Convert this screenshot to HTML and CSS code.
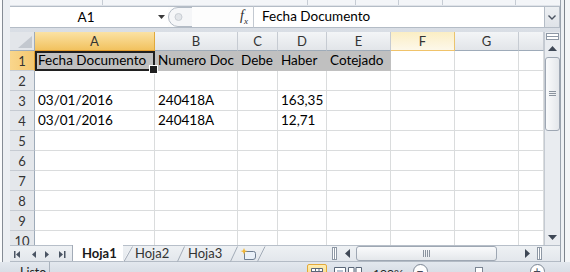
FILE: index.html
```html
<!DOCTYPE html>
<html lang="es">
<head>
    <meta charset="UTF-8">
    <meta name="viewport" content="width=device-width, initial-scale=1.0">
    <title>Libro1 - Microsoft Excel</title>
    <link rel="stylesheet" href="styles.css">
</head>
<body>
<div class="app">
    <div class="window">
        <div class="frame-left"></div>

        <div class="main">
            <!-- Bottom edge of the ribbon -->
            <div class="ribbon-edge"></div>

            <!-- Formula bar -->
            <div class="formula-bar">
                <div class="name-box">
                    <span class="cell-ref">A1</span>
                    <svg class="dd-arrow" width="7" height="4" viewBox="0 0 7 4"><path d="M0 0h7L3.5 4z" fill="#3a3a3a"/></svg>
                </div>
                <div class="fx-zone">
                    <svg class="splitter" width="24" height="20" viewBox="0 0 24 20">
                        <path d="M24 0.5H10A9.5 9.5 0 0 0 10 19.5H24" fill="#f5f6f8" stroke="#b3bbc5"/>
                        <circle cx="10.5" cy="10" r="3.5" fill="#e2e5e9" stroke="#c9ced4"/>
                    </svg>
                    <span class="fx">f<sub>x</sub></span>
                </div>
                <div class="formula-input">Fecha Documento</div>
                <div class="expand-btn">
                    <svg width="8" height="5" viewBox="0 0 8 5"><path d="M0.5 0.5L4 4L7.5 0.5" fill="none" stroke="#4a5260" stroke-width="1.4"/></svg>
                </div>
            </div>

            <!-- Worksheet -->
            <div class="workspace">
                <div class="sheet">
                    <div class="corner"><svg width="14" height="12" viewBox="0 0 14 12"><path d="M14 0V12H0z" fill="#c3c8cf"/></svg></div>
                    <div class="col-head selected">A</div>
                    <div class="col-head">B</div>
                    <div class="col-head">C</div>
                    <div class="col-head">D</div>
                    <div class="col-head">E</div>
                    <div class="col-head hover">F</div>
                    <div class="col-head">G</div>
                    <div class="col-head"></div>

                    <div class="row-head selected">1</div>
                    <div class="cell fill active">Fecha Documento</div>
                    <div class="cell fill">Numero Doc</div>
                    <div class="cell fill">Debe</div>
                    <div class="cell fill">Haber</div>
                    <div class="cell fill">Cotejado</div>
                    <div class="cell"></div><div class="cell"></div><div class="cell"></div>

                    <div class="row-head">2</div>
                    <div class="cell"></div><div class="cell"></div><div class="cell"></div><div class="cell"></div>
                    <div class="cell"></div><div class="cell"></div><div class="cell"></div><div class="cell"></div>

                    <div class="row-head">3</div>
                    <div class="cell">03/01/2016</div>
                    <div class="cell">240418A</div>
                    <div class="cell"></div>
                    <div class="cell">163,35</div>
                    <div class="cell"></div><div class="cell"></div><div class="cell"></div><div class="cell"></div>

                    <div class="row-head">4</div>
                    <div class="cell">03/01/2016</div>
                    <div class="cell">240418A</div>
                    <div class="cell"></div>
                    <div class="cell">12,71</div>
                    <div class="cell"></div><div class="cell"></div><div class="cell"></div><div class="cell"></div>

                    <div class="row-head">5</div>
                    <div class="cell"></div><div class="cell"></div><div class="cell"></div><div class="cell"></div>
                    <div class="cell"></div><div class="cell"></div><div class="cell"></div><div class="cell"></div>

                    <div class="row-head">6</div>
                    <div class="cell"></div><div class="cell"></div><div class="cell"></div><div class="cell"></div>
                    <div class="cell"></div><div class="cell"></div><div class="cell"></div><div class="cell"></div>

                    <div class="row-head">7</div>
                    <div class="cell"></div><div class="cell"></div><div class="cell"></div><div class="cell"></div>
                    <div class="cell"></div><div class="cell"></div><div class="cell"></div><div class="cell"></div>

                    <div class="row-head">8</div>
                    <div class="cell"></div><div class="cell"></div><div class="cell"></div><div class="cell"></div>
                    <div class="cell"></div><div class="cell"></div><div class="cell"></div><div class="cell"></div>

                    <div class="row-head">9</div>
                    <div class="cell"></div><div class="cell"></div><div class="cell"></div><div class="cell"></div>
                    <div class="cell"></div><div class="cell"></div><div class="cell"></div><div class="cell"></div>

                    <div class="row-head">10</div>
                    <div class="cell"></div><div class="cell"></div><div class="cell"></div><div class="cell"></div>
                    <div class="cell"></div><div class="cell"></div><div class="cell"></div><div class="cell"></div>
                </div>

                <!-- Vertical scrollbar -->
                <div class="vscroll">
                    <div class="split-box"></div>
                    <div class="arrow-btn">
                        <svg width="9" height="5" viewBox="0 0 9 5"><path d="M0 5L4.5 0L9 5z" fill="#3f4856"/></svg>
                    </div>
                    <div class="v-thumb">
                        <svg width="7" height="6" viewBox="0 0 7 6"><path d="M0 0.5H7M0 2.5H7M0 4.5H7" stroke="#8a939e"/></svg>
                    </div>
                    <div class="v-track"></div>
                    <div class="arrow-btn">
                        <svg width="9" height="5" viewBox="0 0 9 5"><path d="M0 0L4.5 5L9 0z" fill="#3f4856"/></svg>
                    </div>
                </div>
            </div>

            <!-- Sheet tabs and horizontal scrollbar -->
            <div class="tabbar">
                <div class="sheet-nav">
                    <svg width="62" height="16" viewBox="0 0 62 16">
                        <g fill="#4a5463">
                            <rect x="4" y="5" width="1.5" height="7"/>
                            <path d="M10 5V12L6 8.5z"/>
                            <path d="M26 5V12L22 8.5z"/>
                            <path d="M35 5V12L39 8.5z"/>
                            <path d="M49 5V12L53 8.5z"/>
                            <rect x="54" y="5" width="1.5" height="7"/>
                        </g>
                    </svg>
                </div>
                <div class="tabs">
                    <div class="tab active">Hoja1</div>
                    <svg class="slash" width="10" height="16" viewBox="0 0 10 16"><path d="M0 16V15L9 0H10" fill="#fff"/><path d="M1 15.5L9.5 0.5" stroke="#a2abb7"/></svg>
                    <div class="tab tab-2">Hoja2</div>
                    <svg class="slash" width="8" height="16" viewBox="0 0 8 16"><path d="M0.5 15.5L7.5 0.5" stroke="#a2abb7"/></svg>
                    <div class="tab tab-3">Hoja3</div>
                    <svg class="slash" width="8" height="16" viewBox="0 0 8 16"><path d="M0.5 15.5L7.5 0.5" stroke="#a2abb7"/></svg>
                    <div class="tab tab-new">
                        <svg width="16" height="12" viewBox="0 0 16 12">
                            <path d="M4.5 3.5H13.5Q15.5 3.5 15.5 5.5V9Q15.5 11.5 13 11.5H4.5z" fill="#e9f0f8" stroke="#6e7d90"/>
                            <path d="M4 0L5 2.5L7.5 3L5 4L4 6.5L3 4L0.5 3L3 2.5z" fill="#f2b531"/>
                        </svg>
                    </div>
                    <svg class="slash" width="10" height="16" viewBox="0 0 10 16"><path d="M0.5 15.5L8 0.5" stroke="#a2abb7"/></svg>
                </div>
                <div class="hscroll">
                    <div class="h-handle"><span></span></div>
                    <div class="arrow-btn h">
                        <svg width="5" height="9" viewBox="0 0 5 9"><path d="M5 0L0 4.5L5 9z" fill="#3f4856"/></svg>
                    </div>
                    <div class="h-thumb">
                        <svg width="7" height="7" viewBox="0 0 7 7"><path d="M0.5 0V7M2.5 0V7M4.5 0V7M6.5 0V7" stroke="#8a939e"/></svg>
                    </div>
                    <div class="h-track"></div>
                    <div class="arrow-btn h">
                        <svg width="5" height="9" viewBox="0 0 5 9"><path d="M0 0L5 4.5L0 9z" fill="#3f4856"/></svg>
                    </div>
                    <div class="h-handle"><span></span></div>
                </div>
                <div class="scroll-corner"></div>
            </div>
        </div>

        <div class="frame-right"></div>
    </div>

    <!-- Status bar -->
    <div class="statusbar">
        <div class="status-text">Listo</div>
        <div class="status-views">
            <div class="view-btn current">
                <svg width="12" height="9" viewBox="0 0 12 9"><path d="M0.5 0.5H11.5V8.5H0.5zM0.5 3.5H11.5M4.5 0.5V8.5M8 0.5V8.5" fill="#fff" stroke="#5a6778"/></svg>
            </div>
            <div class="view-btn layout">
                <svg width="12" height="9" viewBox="0 0 12 9"><path d="M0.5 0.5H11.5V8.5H0.5z" fill="#fff" stroke="#5a6778"/><path d="M3 3H9V8H3z" fill="#b7c3d2"/></svg>
            </div>
            <div class="view-btn">
                <svg width="14" height="9" viewBox="0 0 14 9"><path d="M0.5 0.5H6V8.5H0.5zM8 0.5H13.5V8.5H8z" fill="#fff" stroke="#5a6778"/></svg>
            </div>
            <span class="zoom-level">100%</span>
            <span class="zoom-circle">−</span>
            <div class="zoom-slider"><span class="knob"></span></div>
            <span class="zoom-circle plus">+</span>
        </div>
    </div>
</div>
</body>
</html>
```

FILE: styles.css
```css
/* Base */
* {
    box-sizing: border-box;
}

body {
    margin: 0;
    font-family: Lato, "Liberation Sans", sans-serif;
    background: #eef1f5;
    color: #000;
}

.app {
    width: 570px;
    height: 272px;
    overflow: hidden;
    display: flex;
    flex-direction: column;
}

.window {
    display: flex;
    height: 262px;
    flex: none;
}

/* Window frame */
.frame-left {
    width: 10px;
    flex: none;
    background: linear-gradient(90deg, #fafbfc 0, #fafbfc 2px, #858c95 2px, #858c95 3px, #eceff3 3px);
}

.frame-right {
    width: 10px;
    flex: none;
    background: linear-gradient(90deg, #9aa3ae 0, #9aa3ae 1px, #eef1f4 1px, #eef1f4 4px, #7d848d 4px, #7d848d 5px, #f4f6f8 5px);
}

.main {
    width: 550px;
    display: flex;
    flex-direction: column;
}

/* Ribbon edge */
.ribbon-edge {
    height: 5px;
    flex: none;
    background-color: #f3f5f8;
    background-image:
        linear-gradient(#c6ccd4, #c6ccd4),
        linear-gradient(#c6ccd4, #c6ccd4),
        linear-gradient(#c6ccd4, #c6ccd4),
        linear-gradient(#c6ccd4, #c6ccd4),
        linear-gradient(#c6ccd4, #c6ccd4),
        linear-gradient(#c6ccd4, #c6ccd4);
    background-size: 1px 100%;
    background-repeat: no-repeat;
    background-position: 92px 0, 297px 0, 345px 0, 388px 0, 432px 0, 505px 0;
}

/* Formula bar */
.formula-bar {
    height: 27px;
    flex: none;
    display: flex;
    padding: 1px 0 4px 0;
    background: linear-gradient(#dfe3e9, #d9dee5);
}

.name-box {
    width: 158px;
    display: flex;
    align-items: center;
    background: #fff;
    border-top: 1px solid #b4bcc6;
    border-bottom: 1px solid #b4bcc6;
    font-size: 13.5px;
}

.cell-ref {
    flex: 1;
    text-align: center;
    padding-left: 4px;
}

.dd-arrow {
    margin-right: 3px;
}

.fx-zone {
    width: 85px;
    display: flex;
    align-items: center;
    justify-content: space-between;
    padding-right: 5px;
    background: #fdfdfd;
    border-top: 1px solid #b4bcc6;
    border-bottom: 1px solid #b4bcc6;
}

.fx {
    font-family: "Liberation Serif", serif;
    font-style: italic;
    font-size: 14px;
    color: #2c2c2c;
}

.fx sub {
    font-size: 9px;
}

.formula-input {
    flex: 1;
    background: #fff;
    border-top: 1px solid #b4bcc6;
    border-bottom: 1px solid #b4bcc6;
    border-left: 1px solid #c3c9d1;
    padding-left: 8px;
    font-size: 13.5px;
    line-height: 19px;
}

.expand-btn {
    width: 16px;
    display: flex;
    align-items: center;
    justify-content: center;
    background: linear-gradient(#eceff2, #dfe3e8);
    border: 1px solid #b4bcc6;
}

/* Worksheet */
.workspace {
    height: 213px;
    flex: none;
    display: flex;
}

.sheet {
    width: 534px;
    height: 213px;
    overflow: hidden;
    display: grid;
    grid-template-columns: 25px 120px 83px 40px 49px 64px 64px 64px 25px;
    grid-template-rows: 19px;
    grid-auto-rows: 20px;
    background: #fff;
    font-size: 13.5px;
}

.corner {
    display: flex;
    align-items: flex-end;
    justify-content: flex-end;
    padding: 0 2px 2px 0;
    background: #e3e6ea;
    border-right: 1px solid #9eabb9;
    border-bottom: 1px solid #9eabb9;
}

.col-head {
    background: linear-gradient(#f3f5f7, #e2e5e9);
    border-right: 1px solid #c6cbd2;
    border-bottom: 1px solid #9eabb9;
    text-align: center;
    font-size: 13px;
    line-height: 18px;
    color: #333;
}

.col-head.selected {
    background: linear-gradient(#fbe2a4, #f2c25f);
    border-right-color: #e0a93c;
    border-bottom-color: #e39d2d;
}

.col-head.hover {
    background: linear-gradient(#fbeec4, #fdf8ea);
    border-right-color: #eac46e;
    border-bottom-color: #f0c36a;
}

.row-head {
    background: #e4e7eb;
    border-right: 1px solid #9eabb9;
    border-bottom: 1px solid #c6cbd2;
    text-align: center;
    font-size: 13px;
    line-height: 20px;
    color: #333;
}

.row-head.selected {
    background: linear-gradient(90deg, #f9d68c, #f4c870);
    border-right-color: #e39d2d;
}

.cell {
    border-right: 1px solid #dadcdd;
    border-bottom: 1px solid #dadcdd;
    padding: 0 3px;
    line-height: 19px;
    white-space: nowrap;
}

.cell.fill {
    background: #c0c0c0;
    border-color: #c0c0c0;
}

/* Active cell outline and fill handle */
.cell.active {
    position: relative;
}

.cell.active::after {
    content: "";
    position: absolute;
    top: 0;
    left: 0;
    right: -1px;
    bottom: -1px;
    border: 2px solid #202020;
}

.cell.active::before {
    content: "";
    position: absolute;
    right: -4px;
    bottom: -4px;
    width: 7px;
    height: 7px;
    background: #202020;
    border: 1px solid #fff;
    z-index: 1;
}

/* Vertical scrollbar */
.vscroll {
    width: 16px;
    display: flex;
    flex-direction: column;
    background: #e9ecf0;
    border-left: 1px solid #c4cad2;
}

.split-box {
    height: 7px;
    margin: 1px 1px 0 1px;
    border: 1px solid #8e98a5;
    background: linear-gradient(#fff 0, #fff 2px, #8e98a5 2px, #8e98a5 3px, #fff 3px);
}

.arrow-btn {
    height: 16px;
    flex: none;
    display: flex;
    align-items: center;
    justify-content: center;
}

.v-thumb {
    height: 74px;
    margin: 1px 0 0 0;
    display: flex;
    align-items: center;
    justify-content: center;
    border: 1px solid #9ea7b3;
    border-radius: 3px;
    background: linear-gradient(90deg, #fafbfc, #e4e7eb);
}

.v-track {
    flex: 1;
}

/* Tab bar */
.tabbar {
    height: 17px;
    flex: none;
    display: flex;
    background: linear-gradient(#eef1f4, #e3e7ec);
    border-top: 1px solid #b7bfc9;
    border-bottom: 1px solid #b3bbc5;
}

.sheet-nav {
    width: 62px;
    flex: none;
}

.tabs {
    width: 258px;
    flex: none;
    display: flex;
    align-items: stretch;
}

.tab {
    font-size: 13px;
    line-height: 15px;
    color: #333;
    white-space: nowrap;
}

.tab.active {
    width: 51px;
    margin-top: -1px;
    padding-left: 9px;
    padding-top: 1px;
    background: #fff;
    border-left: 1px solid #a2abb7;
    font-weight: bold;
    color: #1a1a1a;
}

.tab-2 {
    width: 44px;
    padding-left: 2px;
}

.tab-3 {
    width: 45px;
    padding-left: 3px;
}

.tab-new {
    width: 19px;
    padding: 2px 0 0 2px;
}

.slash {
    flex: none;
}

/* Horizontal scrollbar */
.hscroll {
    width: 214px;
    flex: none;
    display: flex;
    align-items: center;
}

.h-handle {
    width: 9px;
    height: 15px;
    display: flex;
    align-items: center;
    justify-content: center;
}

.h-handle span {
    width: 5px;
    height: 13px;
    border: 1px solid #8e98a5;
    background: linear-gradient(90deg, #fff 0, #fff 1px, #8e98a5 1px, #8e98a5 2px, #fff 2px);
}

.arrow-btn.h {
    width: 16px;
    height: 15px;
}

.h-thumb {
    width: 141px;
    height: 15px;
    margin-left: 1px;
    display: flex;
    align-items: center;
    justify-content: center;
    border: 1px solid #9ea7b3;
    border-radius: 3px;
    background: linear-gradient(#fafbfc, #e4e7eb);
}

.h-track {
    flex: 1;
}

.scroll-corner {
    width: 16px;
    flex: none;
}

/* Status bar */
.statusbar {
    height: 10px;
    flex: none;
    display: flex;
    background: linear-gradient(#e3e8ee, #d8dee6);
}

.status-text {
    width: 50px;
    padding: 3px 0 0 20px;
    font-size: 12.5px;
    line-height: 15px;
    color: #222;
    border-right: 1px solid #a9b2bd;
}

.status-views {
    margin-left: auto;
    width: 263px;
    display: flex;
    align-items: flex-start;
    padding-top: 2px;
}

.view-btn {
    width: 14px;
    height: 14px;
    display: flex;
    justify-content: center;
    padding-top: 3px;
}

.view-btn.current {
    width: 20px;
    margin-right: 7px;
    border: 1px solid #e3a93a;
    border-radius: 2px;
    background: linear-gradient(#fdeeb6, #f9d77c);
}

.view-btn.layout {
    width: 12px;
    margin-right: 2px;
}

.zoom-level {
    margin-left: 11px;
    font-size: 12px;
    line-height: 14px;
    padding-top: 3px;
    color: #222;
}

.zoom-circle {
    width: 15px;
    height: 15px;
    margin-left: 9px;
    border: 1px solid #7b8593;
    border-radius: 50%;
    background: #fff;
    font-size: 13px;
    line-height: 12px;
    text-align: center;
    color: #3f4856;
}

.zoom-circle.plus {
    margin-left: 0;
}

.zoom-slider {
    width: 102px;
    height: 15px;
    display: flex;
    justify-content: center;
}

.zoom-slider .knob {
    width: 8px;
    height: 12px;
    margin-top: 3px;
    border: 1px solid #7b8593;
    background: #fff;
}
```
